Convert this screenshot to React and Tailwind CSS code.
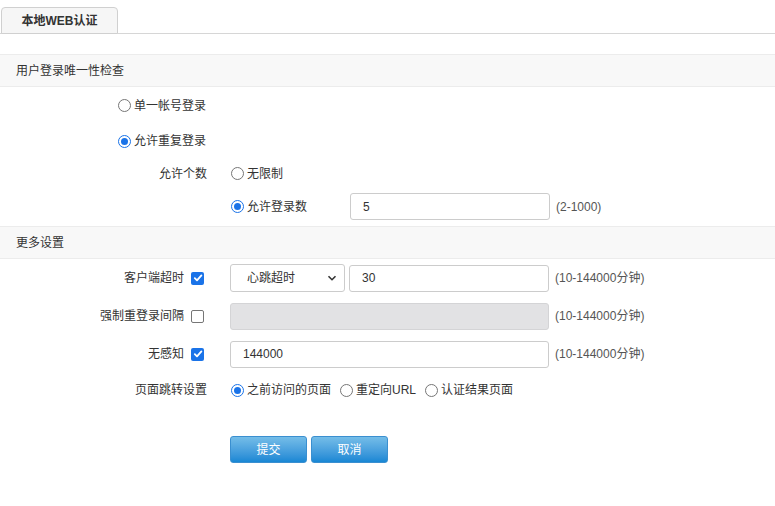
import { useState } from 'react';

const font = { fontFamily: '"Liberation Sans","Noto Sans CJK SC",sans-serif' };

function Radio({ checked, label, onClick }) {
  return (
    <label className="flex items-center gap-[3px] cursor-pointer" onClick={onClick}>
      <span
        className={`w-[13px] h-[13px] rounded-full border flex items-center justify-center bg-white ${
          checked ? 'border-[#1a73e8] border-[1.5px]' : 'border-[#767676]'
        }`}
      >
        {checked && <span className="w-[7px] h-[7px] rounded-full bg-[#1a73e8]" />}
      </span>
      <span className="text-[#333]">{label}</span>
    </label>
  );
}

function Check({ checked, onClick }) {
  return (
    <span
      onClick={onClick}
      className={`w-[13px] h-[13px] rounded-[2px] flex items-center justify-center cursor-pointer ${
        checked ? 'bg-[#1a73e8]' : 'border border-[#767676] bg-white'
      }`}
    >
      {checked && (
        <svg width="10" height="10" viewBox="0 0 10 10">
          <path d="M1.8 5.2 L4 7.4 L8.4 2.4" fill="none" stroke="white" strokeWidth="1.8" strokeLinecap="round" strokeLinejoin="round" />
        </svg>
      )}
    </span>
  );
}

function Section({ title }) {
  return (
    <div className="h-[33px] bg-[#f8f8f8] border-y border-[#ececec] flex items-center pl-4 text-[#333]">
      {title}
    </div>
  );
}

const inputClass =
  'h-[27px] border border-[#cccccc] rounded-[3px] bg-white px-3 text-[12px] text-[#333] outline-none';
const hintClass = 'ml-[6px] text-[#555]';

export default function App() {
  const [loginMode, setLoginMode] = useState('repeat');
  const [limit, setLimit] = useState('count');
  const [timeout, setTimeoutOn] = useState(true);
  const [force, setForce] = useState(false);
  const [silent, setSilent] = useState(true);
  const [jump, setJump] = useState('prev');

  return (
    <div className="w-[775px] h-[506px] bg-white text-[12px] leading-[16px]" style={font}>
      {/* tabs */}
      <div className="pt-[7px] border-b border-[#d6d6d6] flex">
        <div className="w-[117px] h-[27px] ml-[1px] -mb-px border border-[#d0d0d0] rounded-t-[4px] bg-[#f6f6f6] flex items-center justify-center font-bold text-[#333]">
          本地WEB认证
        </div>
      </div>

      <div className="h-[20px]" />

      <Section title="用户登录唯一性检查" />

      <div className="h-[37px] flex items-center pl-[118px]">
        <Radio checked={loginMode === 'single'} label="单一帐号登录" onClick={() => setLoginMode('single')} />
      </div>
      <div className="h-[34px] flex items-center pl-[118px]">
        <Radio checked={loginMode === 'repeat'} label="允许重复登录" onClick={() => setLoginMode('repeat')} />
      </div>
      <div className="h-[31px] flex items-center">
        <div className="w-[207px] text-right text-[#333]">允许个数</div>
        <div className="ml-[24px]">
          <Radio checked={limit === 'none'} label="无限制" onClick={() => setLimit('none')} />
        </div>
      </div>
      <div className="h-[35px] flex items-center">
        <div className="w-[207px]" />
        <div className="ml-[24px] w-[119px]">
          <Radio checked={limit === 'count'} label="允许登录数" onClick={() => setLimit('count')} />
        </div>
        <input className={`${inputClass} w-[200px]`} defaultValue="5" />
        <span className={hintClass}>(2-1000)</span>
      </div>

      <div className="h-[2px]" />
      <Section title="更多设置" />

      <div className="h-[38px] flex items-center">
        <div className="w-[204px] flex items-center justify-end gap-[7px] text-[#333]">
          客户端超时
          <Check checked={timeout} onClick={() => setTimeoutOn(!timeout)} />
        </div>
        <div className="ml-[26px] w-[115px] h-[28px] border border-[#cccccc] rounded-[3px] flex items-center justify-between pl-[16px] pr-[7px] text-[#333]">
          <span>心跳超时</span>
          <svg width="10" height="10" viewBox="0 0 10 10">
            <path d="M1.5 3.2 L5 6.7 L8.5 3.2" fill="none" stroke="#333" strokeWidth="1.6" />
          </svg>
        </div>
        <input className={`${inputClass} w-[200px] ml-[4px]`} defaultValue="30" />
        <span className={hintClass}>(10-144000分钟)</span>
      </div>

      <div className="h-[38px] flex items-center">
        <div className="w-[204px] flex items-center justify-end gap-[7px] text-[#333]">
          强制重登录间隔
          <Check checked={force} onClick={() => setForce(!force)} />
        </div>
        <div className="ml-[26px] w-[319px] h-[27px] border border-[#d4d4d6] rounded-[3px] bg-[#e2e2e4]" />
        <span className={hintClass}>(10-144000分钟)</span>
      </div>

      <div className="h-[38px] flex items-center">
        <div className="w-[204px] flex items-center justify-end gap-[7px] text-[#333]">
          无感知
          <Check checked={silent} onClick={() => setSilent(!silent)} />
        </div>
        <input className={`${inputClass} w-[319px] ml-[26px]`} defaultValue="144000" />
        <span className={hintClass}>(10-144000分钟)</span>
      </div>

      <div className="h-[34px] flex items-center">
        <div className="w-[207px] text-right text-[#333]">页面跳转设置</div>
        <div className="ml-[24px] flex items-center gap-[9px]">
          <Radio checked={jump === 'prev'} label="之前访问的页面" onClick={() => setJump('prev')} />
          <Radio checked={jump === 'url'} label="重定向URL" onClick={() => setJump('url')} />
          <Radio checked={jump === 'result'} label="认证结果页面" onClick={() => setJump('result')} />
        </div>
      </div>

      <div className="mt-[29px] pl-[230px] flex gap-[4px]">
        <button className="w-[77px] h-[27px] rounded-[3px] border border-[#3a8fd0] bg-gradient-to-b from-[#74bde8] to-[#1787d4] text-white">
          提交
        </button>
        <button className="w-[77px] h-[27px] rounded-[3px] border border-[#3a8fd0] bg-gradient-to-b from-[#74bde8] to-[#1787d4] text-white">
          取消
        </button>
      </div>
    </div>
  );
}
